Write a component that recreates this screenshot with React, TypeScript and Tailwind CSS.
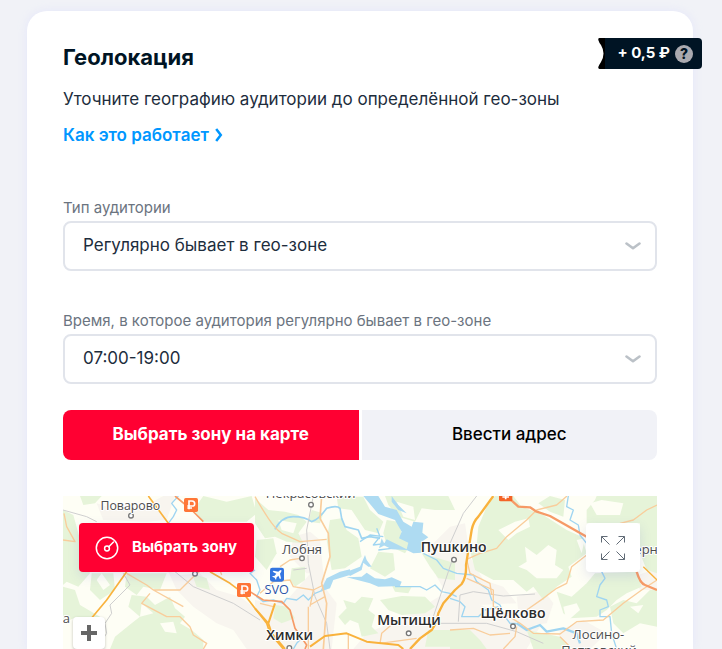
import { useState } from 'react'
import type { ReactNode } from 'react'
import { clsx } from 'clsx'

interface SelectFieldProps {
  id: string
  label: string
  options: string[]
}

interface MapLabelProps {
  x: number
  y: number
  size?: number
  bold?: boolean
  anchor?: 'start' | 'middle'
  children: ReactNode
}

const AUDIENCE_TYPES = ['Регулярно бывает в гео-зоне', 'Живёт в гео-зоне', 'Работает в гео-зоне']
const TIME_RANGES = ['07:00-19:00', '19:00-07:00', 'Круглосуточно']

const TABS = [
  { id: 'map', label: 'Выбрать зону на карте' },
  { id: 'address', label: 'Ввести адрес' },
]

function SelectField({ id, label, options }: SelectFieldProps) {
  return (
    <div>
      <label htmlFor={id} className="block text-[15px] leading-[26px] text-[#6b7480]">
        {label}
      </label>
      <div className="relative">
        <select
          id={id}
          className="block h-[50px] w-full appearance-none rounded-lg border-2 border-[#e1e4eb] bg-white pr-12 pl-[18px] text-[17px] text-[#1d2d3d]"
        >
          {options.map((option) => (
            <option key={option}>{option}</option>
          ))}
        </select>
        <svg
          viewBox="0 0 16 8"
          className="pointer-events-none absolute top-[21px] right-4 h-2 w-4"
          fill="none"
          stroke="#bbc1c7"
          strokeWidth="2.600"
          strokeLinecap="round"
          strokeLinejoin="round"
        >
          <path d="M1.500 1.500 8 6.200l6.500-4.700" />
        </svg>
      </div>
    </div>
  )
}

function PriceBadge() {
  return (
    <div className="absolute top-[27px] -right-[9px] flex h-[31px]">
      <svg viewBox="0 0 7 31" className="h-[31px] w-[7px]">
        <path d="M7 0H1.5Q0 0 .3 2Q1 4.500 3 7Q8 15.500 3 24Q1 27 .3 29Q0 31 1.500 31H7Z" fill="#000" />
      </svg>
      <div className="flex items-center gap-[5px] rounded-r bg-[#001424] pr-[9px] pl-3 text-[15px] font-bold text-white">
        <span>+ 0,5 ₽</span>
        <button
          type="button"
          aria-label="Подробнее о цене"
          className="flex size-[18px] items-center justify-center rounded-full bg-[#aaaab0] text-sm font-extrabold text-[#001424]"
        >
          ?
        </button>
      </div>
    </div>
  )
}

function MapLabel({ x, y, size = 39, bold = false, anchor = 'middle', children }: MapLabelProps) {
  return (
    <text
      x={x}
      y={y}
      fontSize={size}
      fontWeight={bold ? 600 : 400}
      textAnchor={anchor}
      fill={bold ? '#2b2b2b' : '#4d4d4d'}
      stroke="#fff"
      strokeWidth="6"
      strokeLinejoin="round"
      paintOrder="stroke"
    >
      {children}
    </text>
  )
}

function TollSign({ x, y }: { x: number; y: number }) {
  return (
    <g transform={`translate(${x} ${y})`}>
      <rect x="-21" y="-21" width="42" height="42" rx="5" fill="#ff7637" />
      <path d="M-6 13V-12H3Q11-12 11-4T3 3H-11M-11 9H3" fill="none" stroke="#fff" strokeWidth="5" />
    </g>
  )
}

// The map is drawn in three tiles, each 585 units wide
function MapCanvas() {
  return (
    <svg
      viewBox="9 18 1782 459"
      preserveAspectRatio="xMidYMid slice"
      className="block h-full w-full font-['Open_Sans',sans-serif]"
      role="img"
      aria-label="Карта"
    >
      <rect x="0" y="0" width="1800" height="490" fill="#fefef5" />

      {/* towns */}
      <g fill="#f8f5ef">
        <path d="M325 245 360 255 420 250 470 300 540 320 600 365V477H560L520 420 470 400 400 350 350 300Z" />
        <path d="M110 40 170 60 250 50 310 18 345 18 320 90 260 95 130 90Z" />
        <path d="M585 330 640 340 690 320 760 240 790 245 800 300 830 340 815 477H585Z" />
        <path d="M700 140 750 125 780 150 790 250 740 250 690 200Z" />
        <path d="M920 430 1000 395 1060 370 1120 330 1170 300 1200 320 1350 380 1440 410 1400 477H880Z" />
        <path d="M1100 180 1170 110 1215 100 1230 200 1270 270 1330 290 1370 340 1250 345 1170 330 1130 260Z" />
        <path d="M1370 320 1450 300 1480 340 1460 400 1380 410Z" />
        <path d="M1720 260 1791 235V300L1740 300Z" />
        <path d="M1500 420 1570 390 1640 430 1590 477H1490Z" />
      </g>

      {/* forests */}
      <g fill="#e6f4d9">
        <path d="M9 60 40 75 55 130 90 250 55 290 20 275 9 285Z" />
        <path d="M60 18H125L105 40 70 45Z" />
        <path d="M95 250 160 250 165 300 120 330 90 300Z" />
        <path d="M9 290 45 300 60 345 120 380 100 430 50 380 9 400Z" />
        <path d="M200 250 320 250 300 300 250 290 230 315 195 290Z" />
        <path d="M215 315 260 320 285 345 330 320 345 355 375 380 360 400 395 420 430 450 430 477H150L165 440 215 400 240 380 205 350Z" />
        <path d="M395 250 440 265 450 300 410 290Z" />
        <path d="M430 18 500 35 575 18 590 70 560 95H430L400 60Z" />
        <path d="M590 150 640 145 650 190 620 240 585 200Z" />
      </g>
      <g transform="translate(585 0)" fill="#e6f4d9">
        <path d="M0 25 40 60 90 65 130 75 155 95 130 130 145 160 95 155 60 140 30 145 0 100Z" />
        <path d="M245 20H325L345 60 385 95 370 130 330 120 290 60 250 55Z" />
        <path d="M170 60 205 70 195 100 160 95Z" />
        <path d="M225 90 260 85 275 120 310 145 320 200 270 235 230 240 215 150Z" />
        <path d="M395 90 430 95 440 130 470 160 450 190 395 165 385 130Z" />
        <path d="M370 185 415 190 420 240 390 260 345 235Z" />
        <path d="M390 18H580L600 60 540 60 500 55 480 95 430 80 400 45Z" />
        <path d="M500 190 600 220V270L550 265 525 230Z" />
        <path d="M265 330 300 340 320 320 355 325 340 360 360 375 350 410 370 430 320 440 310 400 285 390 270 405 250 380 275 355Z" />
        <path d="M375 330 440 318 510 320 540 350 510 370 440 375 400 360Z" />
        <path d="M110 235 150 230 150 270 120 290 105 270Z" />
        <path d="M60 345 100 350 120 385 80 400 55 385Z" />
        <path d="M520 420H600V470H510Z" />
        <path d="M410 285 470 290 460 310 420 305Z" />
      </g>
      <g transform="translate(1170 0)" fill="#e6f4d9">
        <path d="M85 110 110 50 135 18 190 18 215 50 280 75 350 120 395 140 410 190 355 230 365 260 320 290 280 330 250 290 230 305 190 270 130 270 75 240 60 180 80 165Z" />
        <path d="M300 18 345 30 340 80 300 65 265 40Z" />
        <path d="M410 60 435 30 440 18H621V250L590 240 570 190V100H410Z" />
        <path d="M320 305 365 320 410 280 435 250 560 245 575 290 530 310 500 330 470 360 440 380 360 385 340 370Z" />
        <path d="M480 350 520 330 560 340 600 300 621 300V410L570 400 520 430 490 400Z" />
        <path d="M0 420 60 420 90 450 110 477H0Z" />
        <path d="M230 420 330 440 360 477H250Z" />
      </g>

      {/* clearings */}
      <g fill="#fefef5">
        <path d="M125 250 150 285 130 300 110 270Z" />
        <path d="M245 340 280 370 240 380Z" />
        <path d="M300 400 340 395 350 430 315 425Z" />
        <path d="M655 90 710 100 700 130 665 120Z" />
        <path d="M1010 35 1060 50 1065 90 1030 80Z" />
        <path d="M1315 120 1365 95 1405 85 1410 110 1370 130 1345 150Z" />
        <path d="M1395 170 1430 195 1465 165 1490 180 1485 225 1510 240 1490 265 1430 265 1400 240 1375 230 1400 215Z" />
        <path d="M1590 40 1625 30 1690 40 1680 75 1610 75Z" />
        <path d="M1510 350 1550 340 1560 360 1520 395Z" />
        <path d="M1710 350 1750 345 1735 370Z" />
        <path d="M1550 150 1575 145 1565 190Z" />
      </g>

      {/* water */}
      <g fill="none" stroke="#9fd5f1" strokeWidth="4" strokeLinejoin="round">
        <path d="M355 18 335 40 350 60 340 80 325 100M585 240 570 250 590 270 600 300 590 320 610 335 640 330 670 340 680 325 710 330 730 315 745 330 765 310 790 300" />
        <path d="M645 118Q665 80 700 80T755 95Q775 90 800 55Q830 45 840 55L845 85 855 110 895 120 905 145 930 140 960 145" strokeWidth="5" />
        <path d="M950 115 960 140 940 165 980 160 995 175 955 180M900 155 930 135 970 140" />
        <path d="M1005 290 1080 290 1100 300 1125 285 1145 305 1170 310 1190 320" />
        <path d="M1090 190 1130 210 1150 235 1190 250 1240 255 1250 275 1285 300 1295 330 1320 345 1335 380 1350 400 1370 400" />
        <path d="M1170 325 1200 335 1215 350 1205 380 1255 380 1275 360 1315 350" />
        <path d="M1525 18 1520 50 1540 60 1530 90 1555 105 1560 135 1580 160M1625 245 1635 265 1620 285 1610 320 1640 330 1645 350 1620 360 1620 380 1650 380 1655 430 1670 477" />
        <path d="M1370 400 1400 420 1440 405 1460 425 1510 415 1550 430 1560 460" strokeWidth="7" />
        <path d="M700 477 710 460 720 450" />
      </g>
      <g transform="translate(585 0)" fill="#aedbf2">
        <path d="M325 18H370L390 50 425 60 445 95 470 110 475 95 505 98 502 128 520 142 500 155V188L475 190 455 180 410 178 385 165 395 148 430 165 455 178 460 158 432 145 440 125 420 90 370 72Z" />
        <path d="M410 18 430 45 455 70 430 60 410 35Z" />
        <path d="M195 305 215 265 255 245 285 238 285 255 235 270 225 295Z" />
        <path d="M275 245 315 230 330 195 335 210 350 230 340 230 325 218 320 240 285 258Z" />
        <path d="M320 260 335 248 360 265 390 268 410 262 440 275 435 288 370 290 345 280 275 262Z" />
        <path d="M372 175 380 145 390 165Z" />
      </g>

      {/* railways */}
      <g fill="none" stroke="#cfcfcf" strokeWidth="3">
        <path d="M9 60 80 80 110 95M190 250 210 285 150 345 155 370 135 400 140 430 110 477" />
        <path d="M345 245 400 290 520 340 600 390" />
        <path d="M760 18 740 120 745 220 765 320 800 400 810 477" />
        <path d="M1250 18 1210 70 1170 160M1180 200 1140 320 1110 410" />
        <path d="M1195 395 1200 315 1240 305 1330 318 1425 312" />
        <path d="M1120 400 1280 400 1370 425 1450 460M700 240 740 235" />
      </g>

      {/* local roads */}
      <g fill="none" stroke="#f9cd9b" strokeWidth="4" strokeLinejoin="round">
        <path d="M9 150 45 155 20 110 12 70" />
        <path d="M200 250 260 285 280 300 360 300 400 260 430 235M270 310 245 340 320 380 360 380 390 410 400 435 440 460 430 477M280 300 370 350" />
        <path d="M430 245 470 210 485 255M585 20Q605 55 625 85T665 130L720 155 800 148" />
        <path d="M785 18 780 85 805 130 810 200 785 280 800 340 790 477" strokeWidth="5" />
        <path d="M660 230 690 210 720 205M600 310 640 275 690 270 700 290 760 300 790 285" />
        <path d="M745 350 745 477M750 345 795 320M760 300 750 350M600 340 640 350" />
        <path d="M865 430V477M1070 445 960 460 965 430 1000 400" />
        <path d="M1220 208 1260 190 1310 175 1340 140 1400 90 1430 60 1490 45 1521 18" />
        <path d="M1220 265 1300 300 1300 350 1380 400 1420 430 1500 432 1550 395 1630 390 1690 340 1745 300 1791 270" />
        <path d="M1400 360 1450 325 1490 295 1520 280 1535 230 1580 195" />
        <path d="M1220 208 1230 250 1290 280 1295 315M1170 420 1240 415 1290 435 1350 430" />
        <path d="M1680 100 1720 90 1760 60 1791 45M1330 477 1365 440 1370 410M1500 440 1530 470" />
      </g>

      {/* highways */}
      <g fill="none" stroke="#f9b23c" strokeWidth="7" strokeLinejoin="round">
        <path d="M265 18 325 100M200 245 140 330 90 390 75 430M450 245 510 280 550 310 620 400 630 430 670 477" strokeWidth="5" />
        <path d="M585 355 625 400M645 340 625 400 635 430 675 477M750 470 795 438 860 430 920 455 1015 465 1030 477" strokeWidth="6" />
        <path d="M1050 477 1080 445 1115 420Q1130 400 1135 370L1150 340 1185 300 1205 282Q1220 260 1218 225L1235 120Q1240 95 1255 80L1300 18" />
        <path d="M1750 230 1791 270" strokeWidth="4" />
      </g>
      <g fill="none" stroke="#f69a66" strokeWidth="7" strokeLinejoin="round">
        <path d="M345 18 395 60 430 95M570 305 610 330 665 335 690 360 705 415 740 465 735 477" strokeWidth="5" />
        <path d="M1340 18 1375 50 1410 52 1430 65 1470 78 1580 140M1730 245Q1740 280 1755 285L1791 300" />
      </g>

      {/* town markers */}
      <g fill="#fff" stroke="#777" strokeWidth="4">
        <circle cx="213" cy="77" r="7" />
        <circle cx="405" cy="251" r="7" />
        <circle cx="753" cy="44" r="7" />
        <circle cx="726" cy="205" r="7" />
        <circle cx="1182" cy="209" r="7" />
        <circle cx="1046" cy="430" r="7" />
        <circle cx="1359" cy="409" r="7" />
        <circle cx="688" cy="474" r="7" />
      </g>

      <TollSign x={393} y={45} />
      <TollSign x={552} y={300} />
      <g transform="translate(1337 14)">
        <rect x="-20" y="-20" width="40" height="40" rx="5" fill="#f46427" />
        <path d="M-10 7H10M0-5V14" stroke="#fff" strokeWidth="5" />
      </g>

      <g transform="translate(651 254)">
        <rect x="-21" y="-21" width="42" height="42" rx="7" fill="#3375e0" />
        <path
          d="M13-14Q9-15 4-9L-10-12-13-9-2-3-8 4-13 4-14 6-7 9-4 15-2 14-2 9 4 3 9 14 12 11 9-3Q15-10 13-14Z"
          fill="#fff"
        />
      </g>

      <MapLabel x={211} y={61} size={37}>Поварово</MapLabel>
      <MapLabel x={752} y={24}>Некрасовский</MapLabel>
      <MapLabel x={726} y={192}>Лобня</MapLabel>
      <MapLabel x={1181} y={185} size={42} bold>Пушкино</MapLabel>
      <MapLabel x={1047} y={406} size={42} bold>Мытищи</MapLabel>
      <MapLabel x={689} y={449} size={42} bold>Химки</MapLabel>
      <MapLabel x={1359} y={384} size={42} bold>Щёлково</MapLabel>
      <MapLabel x={1615} y={446}>Лосино-</MapLabel>
      <MapLabel x={1617} y={494}>Петровский</MapLabel>
      <MapLabel x={1696} y={192} anchor="start">Черноголовка</MapLabel>
      <MapLabel x={8} y={399} anchor="start">а</MapLabel>
      <text x="650" y="312" fontSize="38" textAnchor="middle" fill="#2c55a5" stroke="#fff" strokeWidth="6" paintOrder="stroke">
        SVO
      </text>
    </svg>
  )
}

function ZoneMap() {
  return (
    <div className="relative mt-9 aspect-[594/153] w-full overflow-hidden">
      <MapCanvas />

      <button
        type="button"
        className="absolute top-[27px] left-4 flex h-[49px] items-center gap-[13px] rounded bg-[#ff0032] pr-[17px] pl-4 text-[15px] font-bold text-white shadow-[0_4px_12px_rgba(80,90,200,0.15)]"
      >
        <svg viewBox="0 0 24 24" className="size-6" fill="none" stroke="currentColor" strokeWidth="1.5" strokeLinecap="round">
          <circle cx="12" cy="12" r="10.700" />
          <circle cx="12" cy="12.500" r="2.400" />
          <path d="M13.800 10.700 18.500 6" />
        </svg>
        Выбрать зону
      </button>

      <button
        type="button"
        aria-label="На весь экран"
        className="absolute top-[27px] right-[17px] flex h-[49px] w-[54px] items-center justify-center rounded bg-white text-[#626c77] shadow-[0_4px_12px_rgba(80,90,200,0.15)]"
      >
        <svg viewBox="0 0 24 24" className="size-6" fill="none" stroke="currentColor" strokeWidth="1">
          <path d="M.5 6.500V.5H6.500M.5.5 8.500 8.500M17.500.5H23.500V6.500M23.500.5 15.500 8.500M.5 17.500V23.500H6.500M.5 23.500 8.500 15.500M17.500 23.500H23.500V17.500M23.500 23.500 15.500 15.500" />
        </svg>
      </button>

      <button
        type="button"
        aria-label="Приблизить"
        className="absolute top-[121px] left-[10px] flex size-8 items-center justify-center rounded bg-white text-[#666] shadow-[0_1px_3px_rgba(0,0,0,0.25)]"
      >
        <svg viewBox="0 0 16 16" className="size-4" stroke="currentColor" strokeWidth="4">
          <path d="M8 0v16M0 8h16" />
        </svg>
      </button>
    </div>
  )
}

export default function App() {
  const [activeTab, setActiveTab] = useState('map')

  return (
    <main className="min-h-screen bg-[#f1f2f7] pt-[11px] pr-[29px] pl-[27px] font-['Inter','Liberation_Sans',sans-serif] text-[#001424]">
      <section className="relative rounded-t-[20px] bg-white px-9 pt-8 shadow-[0_0_10px_rgba(210,215,255,0.4)]">
        <PriceBadge />

        <h2 className="text-[22px] leading-7 font-bold">Геолокация</h2>
        <p className="mt-4 text-[17px] leading-6 text-[#1d2d3d]">
          Уточните географию аудитории до определённой гео-зоны
        </p>
        <a href="#how" className="mt-3 flex w-fit items-center gap-1.5 text-[17px] leading-6 font-semibold text-[#0097ff]">
          Как это работает
          <svg viewBox="0 0 8 14" className="h-3.5 w-2" fill="none" stroke="currentColor" strokeWidth="2.500">
            <path d="M1.200 1 5.800 7l-4.600 6" />
          </svg>
        </a>

        <div className="mt-12 flex flex-col gap-[37px]">
          <SelectField id="audience-type" label="Тип аудитории" options={AUDIENCE_TYPES} />
          <SelectField
            id="audience-time"
            label="Время, в которое аудитория регулярно бывает в гео-зоне"
            options={TIME_RANGES}
          />
        </div>

        <div className="mt-[26px] grid grid-cols-2 gap-[3px] overflow-hidden rounded-lg">
          {TABS.map((tab) => (
            <button
              key={tab.id}
              type="button"
              onClick={() => setActiveTab(tab.id)}
              className={clsx(
                'h-[50px] text-[17px]',
                activeTab === tab.id ? 'bg-[#ff0032] font-bold text-white' : 'bg-[#f1f2f7] font-medium text-black'
              )}
            >
              {tab.label}
            </button>
          ))}
        </div>

        <ZoneMap />
      </section>
    </main>
  )
}
